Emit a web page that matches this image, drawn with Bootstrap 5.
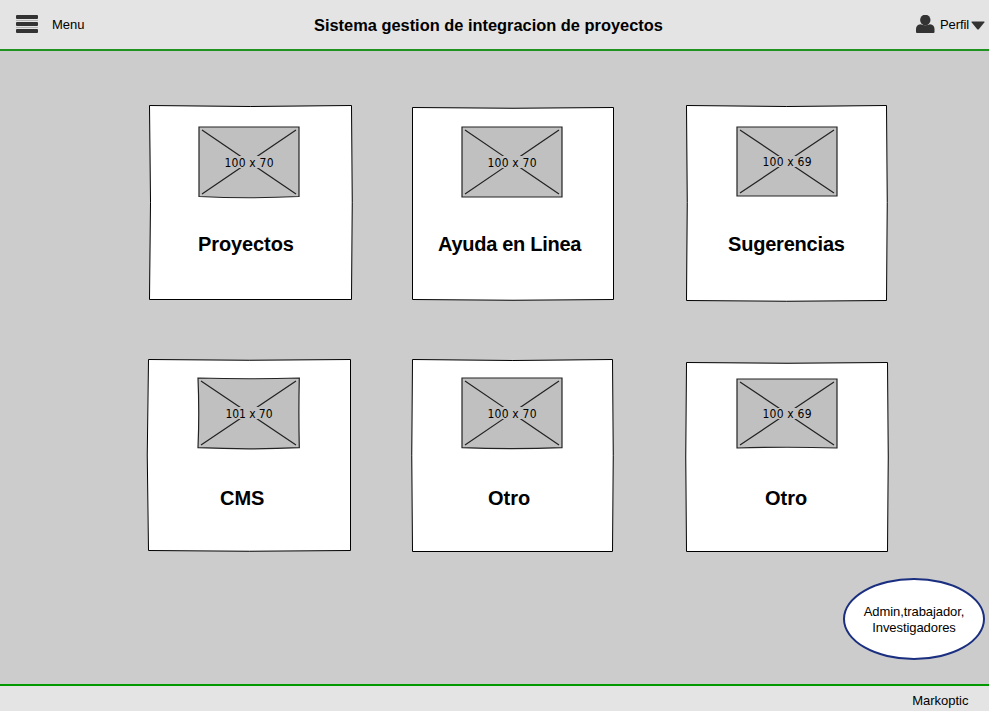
<!DOCTYPE html>
<html lang="es">
<head>
<meta charset="utf-8">
<meta name="viewport" content="width=device-width, initial-scale=1">
<title>Sistema gestion de integracion de proyectos</title>
<link href="https://cdn.jsdelivr.net/npm/bootstrap@5.3.0/dist/css/bootstrap.min.css" rel="stylesheet">
<style>
body{font-family:"Liberation Sans",Arial,sans-serif;font-size:13px;line-height:16px;color:#000;background:#ccc;height:711px;overflow:hidden}
.topbar{height:51px;background:#e4e4e4;border-bottom:2px solid #1f931f;display:grid;grid-template-columns:314px 1fr 73px}
.menu-link{padding:0 0 1px 16px;gap:14px}
.menu-link svg{margin-bottom:1px}
.menu-link span,.profile-link span{padding-top:2px}
.app-title{font-size:16.4px;line-height:20px;font-weight:700;white-space:nowrap;padding-top:1px}
.profile-link{padding-bottom:1px;gap:5px}
.profile-link span{letter-spacing:-.1px;width:29px}
.caret{margin:2px 0 0 -3px}
.tiles{display:grid;grid-template-columns:264px 274px 204px;grid-template-rows:254px 198px;padding:54px 0 0 148px}
.tile{display:grid;width:204px;height:198px}
.tile>*{grid-area:1/1}
.tile svg{overflow:visible}
.tile h2{font-size:20px;line-height:24px;font-weight:700;margin:127px 0 0;white-space:nowrap;z-index:1}
.frame{fill:#fff;stroke:#000}
.pic{fill:#c0c0c0;stroke:#222;stroke-width:1.2}
.diag{fill:none;stroke:#222;stroke-width:1.2}
.gap-box{fill:#c0c0c0}
.size{font:12px "DejaVu Sans Condensed","DejaVu Sans",sans-serif;fill:#000}
.t1 h2{padding-left:50px;letter-spacing:-.1px}.t2 h2{padding-left:26px;letter-spacing:-.28px}.t3 h2{padding-left:42px;letter-spacing:-.2px}
.t4 h2{padding-left:72px}.t5 h2{padding-left:76px}.t6 h2{padding-left:79px}
.roles{width:142px;height:82px;border:2px solid #1a2f80;border-radius:50%;background:#fff;margin:21px 4px 0 auto;padding-top:2px;letter-spacing:-.08px}
.bottombar{height:27px;background:#e4e4e4;border-top:2px solid #009a00;padding:7px 20.5px 0 0}
</style>
<script src="https://cdn.jsdelivr.net/npm/bootstrap@5.3.0/dist/js/bootstrap.bundle.min.js"></script>
</head>
<body class="d-flex flex-column">
<header class="topbar flex-shrink-0">
  <div class="menu-link d-flex align-items-center">
    <svg width="22" height="18" viewBox="0 0 22 18" fill="#333"><path d="M0 5.500h22M0 12.500h22" stroke="#b4b4b4"/><rect width="22" height="4" rx="1"/><rect y="7" width="22" height="4" rx="1"/><rect y="14" width="22" height="4" rx="1"/></svg>
    <span>Menu</span>
  </div>
  <div class="app-title d-flex align-items-center">Sistema gestion de integracion de proyectos</div>
  <div class="profile-link d-flex align-items-center">
    <svg width="19" height="19" viewBox="0 0 19 19" fill="#333"><ellipse cx="9.300" cy="5" rx="5.200" ry="5.300"/><path d="M0 17V14Q0 9.800 4.500 9.200Q9.500 11.500 14 9.200Q18.500 9.800 18.500 14V17Q18.500 18 17.500 18H1Q0 18 0 17Z"/></svg>
    <span>Perfil</span>
    <svg class="caret flex-shrink-0" width="14" height="9" viewBox="0 0 14 9"><path d="M1 .5H13Q14 .7 13.300 1.600L8 8Q7 9 6 8L.7 1.600Q0 .7 1 .5Z" fill="#333"/></svg>
  </div>
</header>
<main class="flex-grow-1">
  <section class="tiles">
    <article class="tile t1">
      <svg width="204" height="198">
        <path class="frame" d="M1.500 .5Q102 2.500 203.500 .5Q205 97 203.500 194.500H1.500Q3.500 97 1.500 .5Z"/>
        <path class="pic" d="M51 22H151V91.500Q101 94 51 91.500Z"/>
        <path class="diag" d="M54 25L148 89M54 89L148 25"/>
        <rect class="gap-box" x="76" y="51" width="50" height="12"/>
        <text class="size" x="76.500" y="62" textLength="49">100 x 70</text>
      </svg>
      <h2>Proyectos</h2>
    </article>
    <article class="tile t2">
      <svg width="204" height="198">
        <path class="frame" d="M.5 2.500Q101 4 201.500 2.500V194.500Q101 196 .5 194.500Z"/>
        <path class="pic" d="M50 22H150V92H50Z"/>
        <path class="diag" d="M53 25L147 89M53 89L147 25"/>
        <rect class="gap-box" x="75" y="51" width="50" height="12"/>
        <text class="size" x="75.500" y="62" textLength="49">100 x 70</text>
      </svg>
      <h2>Ayuda en Linea</h2>
    </article>
    <article class="tile t3">
      <svg width="204" height="198">
        <path class="frame" d="M.5 .5Q101 2.500 200.500 .5Q202 97 200.500 195.500Q101 197 .5 195.500Q2 97 .5 .5Z"/>
        <path class="pic" d="M51 22H151V91H51Z"/>
        <path class="diag" d="M54 25L148 88M54 88L148 25"/>
        <rect class="gap-box" x="76" y="51" width="50" height="11"/>
        <text class="size" x="76.500" y="61" textLength="49">100 x 69</text>
      </svg>
      <h2>Sugerencias</h2>
    </article>
    <article class="tile t4">
      <svg width="204" height="198">
        <path class="frame" d="M.5 .5Q101 2 202.500 .5V191.500Q101 193 .5 191.500Q-2 96 .5 .5Z"/>
        <path class="pic" d="M50 19Q101 20.500 151.300 19Q150.500 54 151.300 88.700Q101 91 50 88.700Q51.500 54 50 19Z"/>
        <path class="diag" d="M53 22L148 86M53 86L148 22"/>
        <rect class="gap-box" x="76" y="48" width="50" height="12"/>
        <text class="size" x="77.500" y="59" textLength="47">101 x 70</text>
      </svg>
      <h2>CMS</h2>
    </article>
    <article class="tile t5">
      <svg width="204" height="198">
        <path class="frame" d="M.5 .5Q101 2.500 200.500 .5Q202 96 200.500 192.500H.5Q-1 96 .5 .5Z"/>
        <path class="pic" d="M50 19H150V88.700Q100 90.500 50 88.700Z"/>
        <path class="diag" d="M53 22L147 86M53 86L147 22"/>
        <rect class="gap-box" x="75" y="48" width="50" height="12"/>
        <text class="size" x="75.500" y="59" textLength="49">100 x 70</text>
      </svg>
      <h2>Otro</h2>
    </article>
    <article class="tile t6">
      <svg width="204" height="198">
        <path class="frame" d="M.5 3.500Q101 5 201.500 3.500Q203 98 201.500 192.500H.5Q-1 98 .5 3.500Z"/>
        <path class="pic" d="M51 20H151V89Q101 87.500 51 89Z"/>
        <path class="diag" d="M54 23L148 86M54 86L148 23"/>
        <rect class="gap-box" x="76" y="49" width="50" height="11"/>
        <text class="size" x="76.500" y="59" textLength="49">100 x 69</text>
      </svg>
      <h2>Otro</h2>
    </article>
  </section>
  <div class="roles d-flex align-items-center justify-content-center text-center">Admin,trabajador,<br>Investigadores</div>
</main>
<footer class="bottombar flex-shrink-0 text-end">Markoptic</footer>
</body>
</html>
